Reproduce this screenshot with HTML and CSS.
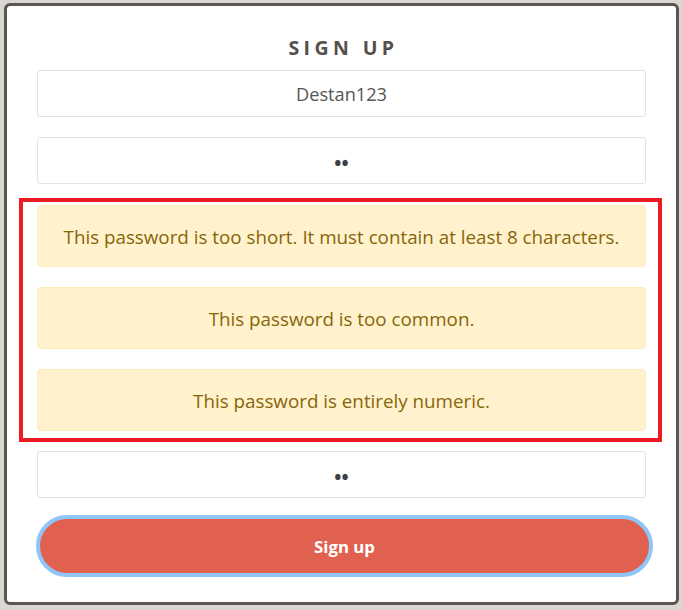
FILE: index.html
```html
<!DOCTYPE html>
<html lang="en">
<head>
<meta charset="utf-8">
<title>Sign up</title>
<link rel="stylesheet" href="styles.css">
</head>
<body>
  <div class="card">
    <h1 class="title">SIGN UP</h1>
    <form class="form">
      <input class="field" type="text" value="Destan123">
      <input class="field" type="password" value="12">
      <div class="errors">
        <div class="alert">This password is too short. It must contain at least 8 characters.</div>
        <div class="alert">This password is too common.</div>
        <div class="alert">This password is entirely numeric.</div>
      </div>
      <input class="field field-last" type="password" value="12">
      <button class="submit" type="button">Sign up</button>
    </form>
  </div>
</body>
</html>
```

FILE: styles.css
```css
* { box-sizing: border-box; }

html, body {
  margin: 0;
  height: 100%;
}

body {
  background: #dad6d1;
  padding: 3px 3px 5px 4px;
  font-family: "Open Sans", "Noto Sans", sans-serif;
}

.card {
  background: #ffffff;
  border: 3px solid #5a5651;
  border-radius: 6px;
  height: 100%;
  padding: 30px 30px 0 30px;
}

.title {
  margin: 0 0 10px 0;
  text-align: center;
  font-size: 19.5px;
  line-height: 24px;
  font-weight: 700;
  letter-spacing: 4.4px;
  padding-left: 4px;
  color: #55504b;
}

.form {
  display: flex;
  flex-direction: column;
}

.field {
  display: block;
  width: 100%;
  height: 47px;
  border: 1px solid #e3e3e3;
  border-radius: 3px;
  background: #fff;
  text-align: center;
  font-family: "Open Sans", "Noto Sans", sans-serif;
  font-size: 18.2px;
  color: #555555;
  margin: 0 0 20px 0;
  padding: 0 12px;
  outline: none;
}

.field[type="password"] {
  font-size: 19px;
  font-weight: 700;
  color: #3f3f46;
  letter-spacing: 0;
  padding-top: 4px;
}

.errors {
  margin: -6px -16px 9px -18px;
  border: 4px solid #ec1c24;
  padding: 3px 12px 7px 14px;
  display: flex;
  flex-direction: column;
  gap: 20px;
}

.alert {
  height: 62px;
  display: flex;
  align-items: center;
  justify-content: center;
  background: #fff2cc;
  border: 1px solid #fdebb8;
  border-radius: 4px;
  color: #876509;
  font-size: 18.8px;
  text-align: center;
  padding-top: 1px;
}

.field-last {
  margin-bottom: 17px;
}

.submit {
  display: block;
  width: calc(100% + 8px);
  margin-left: -1px;
  height: 62px;
  border: 4px solid #90c5fa;
  border-radius: 31px;
  background: #e06150;
  color: #ffffff;
  font-family: "Open Sans", "Noto Sans", sans-serif;
  font-size: 16.8px;
  font-weight: 700;
  cursor: pointer;
}
```
